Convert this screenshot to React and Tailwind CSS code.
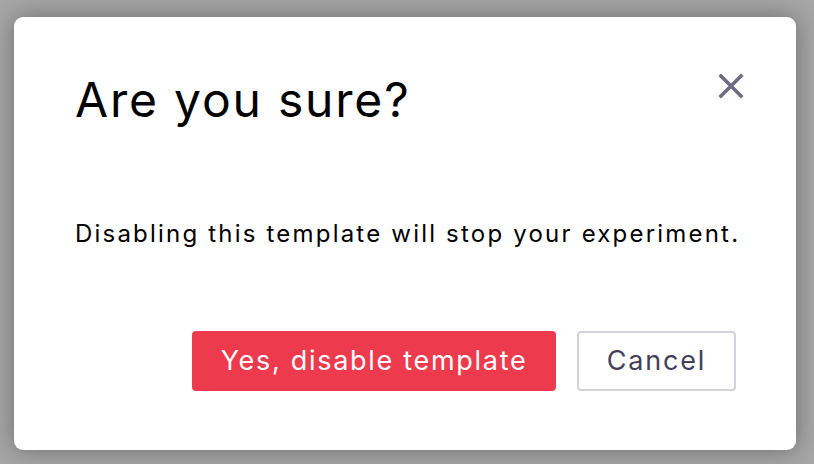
import React from "react";

function CloseIcon() {
  return (
    <svg width="26" height="26" viewBox="0 0 26 26" fill="none">
      <path d="M3 3L23 23M23 3L3 23" stroke="#6f6b82" strokeWidth="3.6" strokeLinecap="square" />
    </svg>
  );
}

export default function App() {
  return (
    <div className="w-[814px] h-[464px] bg-[#a6a6a6] pl-[14px] pr-[18px] pt-[17px] pb-[14px] font-['Inter',sans-serif]">
      <div className="w-full h-full bg-white rounded-[9px] shadow-[0_0_24px_rgba(0,0,0,0.35)] flex flex-col pl-[61px] pr-[60px]">
        <div className="flex items-start justify-between pt-[54px]">
          <h1 className="text-[48px] leading-[58px] text-black tracking-[1.8px]">Are you sure?</h1>
          <button className="mt-[2px] -mr-[8px]">
            <CloseIcon />
          </button>
        </div>
        <p className="mt-[91px] text-[24px] leading-[28px] tracking-[2.2px] text-black whitespace-nowrap">
          Disabling this template will stop your experiment.
        </p>
        <div className="mt-[83px] flex justify-end gap-[21px]">
          <button className="h-[60px] w-[364px] rounded-[4px] bg-[#ed3a4c] text-white text-[27px] tracking-[1.7px]">
            Yes, disable template
          </button>
          <button className="h-[60px] w-[159px] rounded-[4px] border-2 border-[#d3d2dc] text-[#433f59] text-[27px] tracking-[1.8px]">
            Cancel
          </button>
        </div>
      </div>
    </div>
  );
}
